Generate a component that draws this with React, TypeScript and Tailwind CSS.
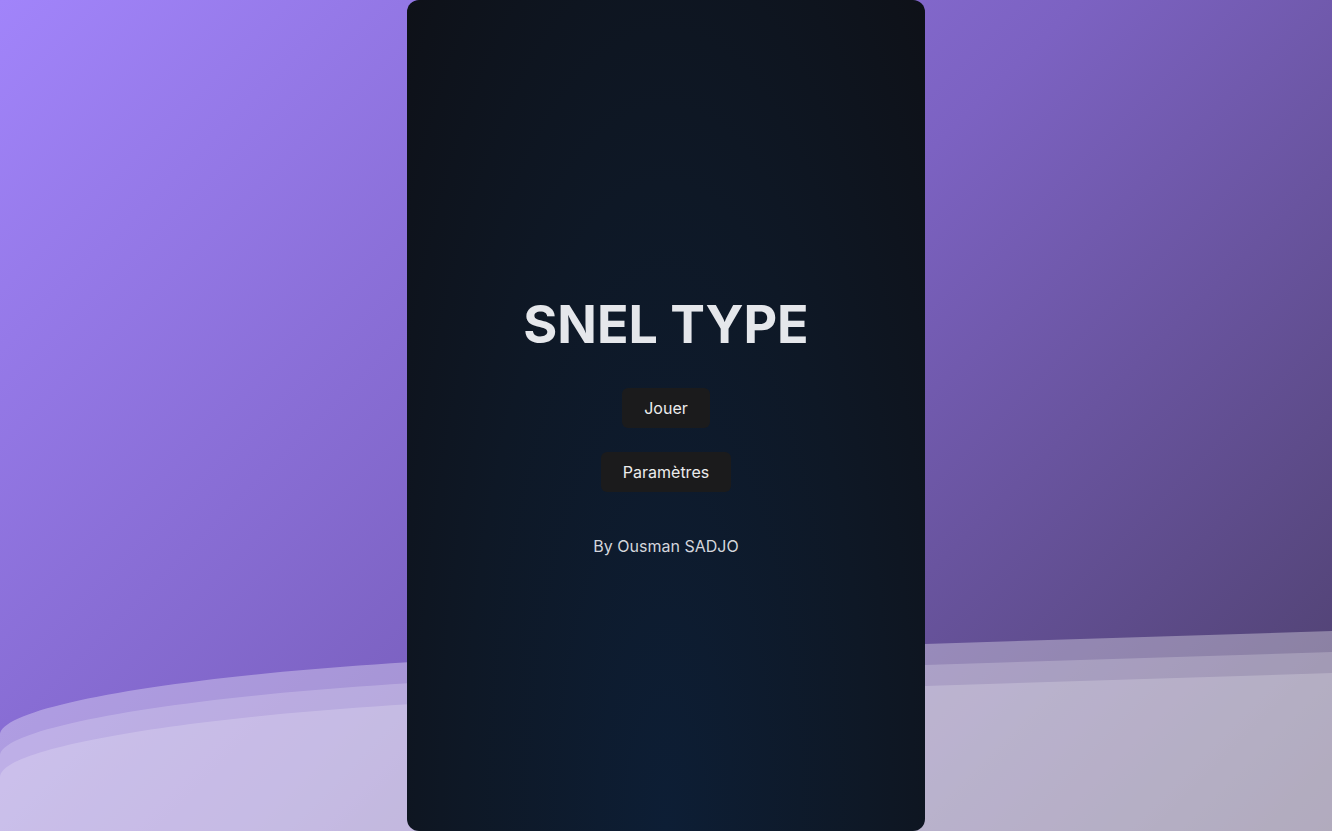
export default function App() {
  return (
    <div
      className="relative flex h-screen w-full justify-center overflow-hidden bg-[linear-gradient(135deg,#a184fa_0%,#7c62c2_50%,#4b3e68_100%)]"
      style={{ fontFamily: "Inter, 'Noto Sans', sans-serif" }}
    >
      {/* Background waves */}
      <svg
        className="absolute bottom-0 left-0 h-[200px] w-full"
        viewBox="0 0 1332 200"
        preserveAspectRatio="none"
      >
        <path
          d="M0 200 V104 C0 70 246 34 549 25 L1332 0 V200 Z"
          fill="#ffffff"
          fillOpacity="0.33"
        />
        <path
          d="M0 200 V125 C0 91 246 55 549 46 L1332 21 V200 Z"
          fill="#ffffff"
          fillOpacity="0.2"
        />
        <path
          d="M0 200 V146 C0 112 246 76 549 67 L1332 42 V200 Z"
          fill="#ffffff"
          fillOpacity="0.2"
        />
      </svg>

      {/* Card */}
      <div className="relative z-10 flex h-full w-[518px] flex-col items-center justify-center rounded-xl bg-[radial-gradient(ellipse_at_50%_100%,#0d1e35_0%,#0e1826_55%,#0e1118_100%)] pt-[26px]">
        <h1 className="text-[52px] font-bold leading-none text-[#e5e7eb]">
          SNEL TYPE
        </h1>

        <div className="mt-[37px] flex flex-col items-center gap-6">
          <button className="rounded-md bg-[#1b1b1c] px-[22px] py-2 text-base font-normal text-[#ececec]">
            Jouer
          </button>
          <button className="rounded-md bg-[#1b1b1c] px-[22px] py-2 text-base font-normal text-[#ececec]">
            Paramètres
          </button>
        </div>

        <p className="mt-[42px] text-base text-[#d4d6dc]">By Ousman SADJO</p>
      </div>
    </div>
  );
}
